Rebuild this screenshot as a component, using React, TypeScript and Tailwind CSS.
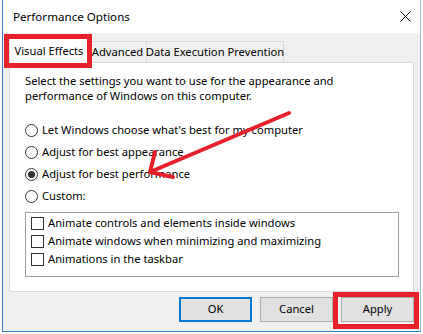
import React from "react";

const Radio = ({ checked, label }: { checked?: boolean; label: string }) => (
  <div className="flex items-center h-[22px]">
    <div className="w-[13px] h-[13px] rounded-full border border-[#333333] bg-white flex items-center justify-center">
      {checked && <div className="w-[7px] h-[7px] rounded-full bg-[#333333]" />}
    </div>
    <span className="ml-[4px] whitespace-nowrap">{label}</span>
  </div>
);

const Check = ({ label }: { label: string }) => (
  <div className="flex items-center h-[18px]">
    <div className="w-[13px] h-[13px] border border-[#333333] bg-white" />
    <span className="ml-[4px] whitespace-nowrap">{label}</span>
  </div>
);

export default function App() {
  return (
    <div className="w-[423px] h-[334px] bg-white relative overflow-hidden text-[11.2px] text-black font-['Segoe_UI','Noto_Sans',sans-serif]">
      <div className="ml-[2px] w-[419px] h-[332px] border-l border-b border-r border-l-[#3b7cc0] border-b-[#3b7cc0] border-r-[#a9bfd6] flex flex-col">
        {/* title bar */}
        <div className="h-[33px] bg-white flex items-center justify-between pl-[10px] pr-[9px] shrink-0">
          <span className="leading-none text-[11.6px]">Performance Options</span>
          <svg width="11" height="11" viewBox="0 0 11 11" className="block">
            <path d="M0.5 0.5 L10.5 10.5 M10.5 0.5 L0.5 10.5" stroke="#111" strokeWidth="1" fill="none" />
          </svg>
        </div>
        {/* body */}
        <div className="flex-1 bg-[#f0f0f0] pt-[5px] px-[6px] flex flex-col">
          <div className="flex items-end h-[24px]">
            <div className="h-[25px] mb-[-1px] relative z-10 bg-white border border-b-0 border-[#d9d9d9] w-[80px] flex items-center justify-center whitespace-nowrap">
              Visual Effects
            </div>
            <div className="h-[21px] border border-b-0 border-l-0 border-[#d9d9d9] w-[58px] flex items-center justify-center whitespace-nowrap">
              Advanced
            </div>
            <div className="h-[21px] border border-b-0 border-l-0 border-[#d9d9d9] w-[137px] flex items-center justify-center whitespace-nowrap">
              Data Execution Prevention
            </div>
          </div>
          <div className="h-[230px] bg-white border border-[#d9d9d9] pl-[15px] pt-[10px]">
            <div className="leading-[15px] whitespace-nowrap">
              Select the settings you want to use for the appearance and
              <br />
              performance of Windows on this computer.
            </div>
            <div className="mt-[16px]">
              <Radio label="Let Windows choose what's best for my computer" />
              <Radio label="Adjust for best appearance" />
              <Radio checked label="Adjust for best performance" />
              <Radio label="Custom:" />
            </div>
            <div className="mt-[5px] w-[374px] h-[65px] border border-[#a0a0a0] pl-[5px] pt-[1px]">
              <Check label="Animate controls and elements inside windows" />
              <Check label="Animate windows when minimizing and maximizing" />
              <Check label="Animations in the taskbar" />
            </div>
          </div>
          <div className="flex justify-end gap-[8px] mt-[5px]">
            <button className="w-[73px] h-[25px] bg-[#e1e1e1] border-2 border-[#0078d7]">OK</button>
            <button className="w-[73px] h-[25px] bg-[#e1e1e1] border border-[#adadad]">Cancel</button>
            <button className="w-[73px] h-[25px] bg-[#e1e1e1] border border-[#adadad]">Apply</button>
          </div>
        </div>
      </div>

      {/* annotations */}
      <div className="absolute left-[4px] top-[34px] w-[88px] h-[34px] border-[5px] border-[#e8202a] z-20" />
      <div className="absolute left-[333px] top-[292px] w-[86px] h-[37px] border-[5px] border-[#e8202a] z-20" />
      <svg className="absolute left-0 top-0 z-20" width="423" height="334" viewBox="0 0 423 334">
        <path
          d="M289 113 L150 172 M150 172 L155 152 M150 172 L173 177"
          stroke="#e8202a"
          strokeWidth="4"
          strokeLinecap="round"
          fill="none"
        />
      </svg>
    </div>
  );
}
